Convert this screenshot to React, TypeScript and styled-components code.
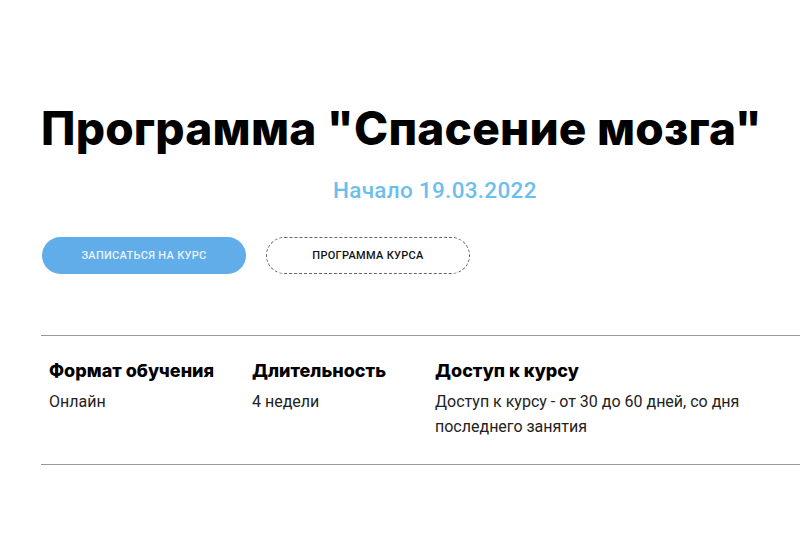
import * as React from "react";
import styled, { createGlobalStyle } from "styled-components";

const GlobalStyle = createGlobalStyle`
  html, body {
    margin: 0;
    padding: 0;
    background: #ffffff;
    overflow: hidden;
  }
  body {
    font-family: Roboto, "Liberation Sans", sans-serif;
    color: #111;
  }
`;

const Page = styled.div`
  width: 800px;
  height: 538px;
  overflow: hidden;
  padding: 97px 0 0 41px;
  box-sizing: border-box;
`;

const Title = styled.h1`
  margin: 0;
  font-family: Inter, "Noto Sans", sans-serif;
  font-weight: 800;
  font-size: 46px;
  letter-spacing: 0.2px;
  line-height: 62px;
  color: #000;
  white-space: nowrap;
`;

const StartDate = styled.div`
  margin: 17px 0 0 292px;
  font-family: Roboto, sans-serif;
  font-weight: 500;
  font-size: 22.5px;
  letter-spacing: 0.3px;
  line-height: 28px;
  color: #6cbfec;
`;

const Buttons = styled.div`
  display: flex;
  gap: 20px;
  margin-top: 33px;
  padding-left: 1px;
`;

const Button = styled.button<{ primary?: boolean }>`
  width: 204px;
  height: 37px;
  border-radius: 19px;
  box-sizing: border-box;
  font-family: Roboto, sans-serif;
  font-size: 11px;
  font-weight: 500;
  letter-spacing: 0.3px;
  text-transform: uppercase;
  cursor: pointer;
  background: ${({ primary }) => (primary ? "#60ade9" : "#fff")};
  color: ${({ primary }) => (primary ? "#e8f3fd" : "#111")};
  border: ${({ primary }) => (primary ? "none" : "1px dashed #666")};
`;

const Details = styled.div`
  margin-top: 61px;
  width: 800px;
  border-top: 1px solid #9a9a9a;
  border-bottom: 1px solid #9a9a9a;
  display: grid;
  grid-template-columns: 203px 183px 340px;
  padding: 24px 0 25px 8px;
`;

const Cell = styled.div`
  display: flex;
  flex-direction: column;
`;

const Label = styled.div`
  font-family: Inter, "Noto Sans", sans-serif;
  font-weight: 800;
  font-size: 18px;
  line-height: 22px;
  color: #000;
`;

const Value = styled.div`
  margin-top: 7px;
  font-family: Roboto, sans-serif;
  font-size: 16px;
  line-height: 25px;
  color: #222;
`;

const items = [
  { label: "Формат обучения", value: "Онлайн" },
  { label: "Длительность", value: "4 недели" },
  {
    label: "Доступ к курсу",
    value: "Доступ к курсу - от 30 до 60 дней, со дня последнего занятия",
  },
];

export default function App() {
  return (
    <>
      <GlobalStyle />
      <Page>
        <Title>Программа "Спасение мозга"</Title>
        <StartDate>Начало 19.03.2022</StartDate>
        <Buttons>
          <Button primary>Записаться на курс</Button>
          <Button>Программа курса</Button>
        </Buttons>
        <Details>
          {items.map((item) => (
            <Cell key={item.label}>
              <Label>{item.label}</Label>
              <Value>{item.value}</Value>
            </Cell>
          ))}
        </Details>
      </Page>
    </>
  );
}
